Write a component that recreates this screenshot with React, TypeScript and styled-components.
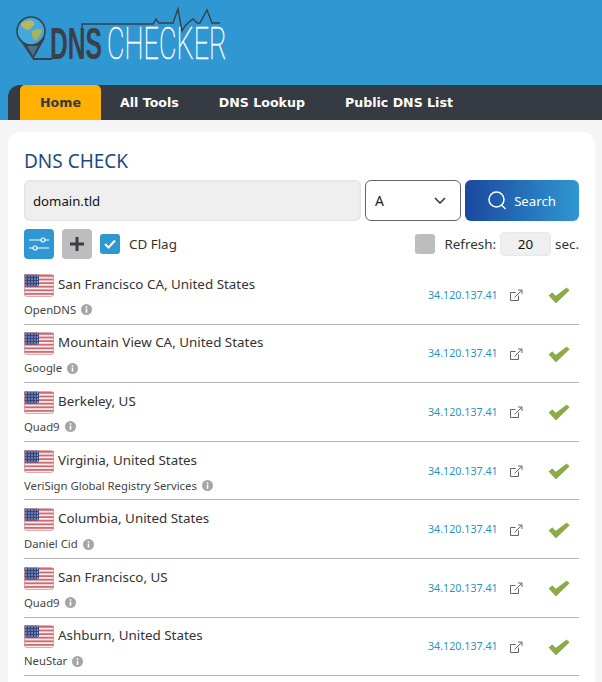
import styled, { createGlobalStyle } from 'styled-components';

const GlobalStyle = createGlobalStyle`
  html, body {
    margin: 0;
    height: 682px;
    overflow: hidden;
    background: #f5f5f5;
    font-family: "Noto Sans", "Open Sans", sans-serif;
  }
  * { box-sizing: border-box; }
`;

const Header = styled.header`
  background: #2f97d1;
  height: 120px;
  display: flex;
  flex-direction: column;
  justify-content: space-between;
`;

const LogoWrap = styled.div`
  padding: 8px 0 0 15px;
  height: 85px;
`;

const LogoSvg = styled.svg`
  overflow: visible;
`;

const Nav = styled.nav`
  margin-left: 8px;
  height: 35px;
  background: #363a42;
  border-top-left-radius: 12px;
  display: flex;
  padding-left: 12px;
`;

const NavItem = styled.a<{ $active?: boolean }>`
  display: flex;
  align-items: center;
  justify-content: center;
  height: 35px;
  padding: 0 20px;
  width: ${(p) => (p.$active ? '81px' : 'auto')};
  margin-right: ${(p) => (p.$active ? '-1px' : '0')};
  background: ${(p) => (p.$active ? '#ffb000' : 'transparent')};
  color: ${(p) => (p.$active ? '#363a42' : '#fff')};
  border-radius: 5px 5px 0 0;
  font-family: "DejaVu Sans", sans-serif;
  font-weight: 700;
  font-size: 12.6px;
`;

const Card = styled.main`
  margin: 12px 7px 0 8px;
  height: 550px;
  background: #fff;
  border-radius: 12px 12px 0 0;
  padding: 16px 16px 0;
  overflow: hidden;
`;

const Title = styled.h1`
  margin: 0;
  height: 32px;
  font-size: 19px;
  line-height: 26px;
  font-weight: 400;
  color: #1f4a80;
`;

const SearchRow = styled.div`
  display: flex;
  gap: 4px;
  height: 41px;
`;

const DomainInput = styled.div`
  width: 337px;
  background: #efefef;
  border-radius: 6px;
  box-shadow: inset 0 0 3px rgba(0, 0, 0, 0.12);
  padding-left: 9px;
  display: flex;
  align-items: center;
  font-size: 13.2px;
  color: #111;
`;

const TypeSelect = styled.div`
  width: 96px;
  border: 1px solid #666;
  border-radius: 6px;
  padding: 0 14px 0 9px;
  display: flex;
  align-items: center;
  justify-content: space-between;
  font-size: 14px;
  color: #222;
`;

const SearchButton = styled.div`
  width: 114px;
  border-radius: 6px;
  background: linear-gradient(90deg, #1a48a0, #2f97d1);
  color: #fff;
  display: flex;
  align-items: center;
  justify-content: center;
  gap: 7px;
  font-size: 13.2px;
`;

const OptionsRow = styled.div`
  display: flex;
  align-items: center;
  height: 30px;
  margin-top: 8px;
  margin-bottom: 7px;
  font-size: 13.4px;
  color: #333;
`;

const SquareButton = styled.div<{ $blue?: boolean }>`
  width: 30px;
  height: 30px;
  border-radius: 4px;
  margin-right: 8px;
  background: ${(p) => (p.$blue ? '#2f97d1' : '#bdbdbd')};
  display: flex;
  align-items: center;
  justify-content: center;
`;

const CheckBox = styled.div<{ $checked?: boolean }>`
  width: 20px;
  height: 20px;
  border-radius: 3px;
  background: ${(p) => (p.$checked ? '#2f97d1' : '#bdbdbd')};
  display: flex;
  align-items: center;
  justify-content: center;
`;

const CdLabel = styled.span`
  margin-left: 9px;
`;

const RefreshGroup = styled.div`
  margin-left: auto;
  display: flex;
  align-items: center;
`;

const RefreshLabel = styled.span`
  margin-left: 9px;
`;

const RefreshInput = styled.div`
  width: 51px;
  height: 24px;
  margin: 0 4px;
  background: #efefef;
  border-radius: 5px;
  box-shadow: inset 0 0 2px rgba(0, 0, 0, 0.1);
  text-align: center;
  line-height: 24px;
  color: #111;
`;

const Row = styled.div`
  height: 58.6px;
  border-bottom: 1px solid #b5b5b5;
  display: grid;
  grid-template-columns: 404px 82px 38px 1fr;
  align-items: center;
`;

const Location = styled.div`
  display: flex;
  flex-direction: column;
  gap: 7px;
  padding-top: 1px;
`;

const PlaceLine = styled.div`
  display: flex;
  align-items: center;
  gap: 4px;
  height: 22px;
  font-size: 13.4px;
  line-height: 22px;
  color: #333;
`;

const FlagSvg = styled.svg`
  margin-top: 3px;
`;

const Provider = styled.div`
  display: flex;
  align-items: center;
  gap: 5px;
  font-size: 11.3px;
  line-height: 16px;
  color: #444;
`;

const Ip = styled.a`
  font-size: 10.7px;
  color: #2d93c4;
`;

const ResultIcon = styled.div`
  display: flex;
  margin-top: 2px;
`;

const ExtIcon = () => (
  <svg width="13" height="13" viewBox="0 0 13 13" fill="none" stroke="#666" strokeWidth="1">
    <path d="M8.5 6.5v5h-8v-8h5" />
    <path d="M4.5 8.5L11.5 1.5M8 1h4v4" />
  </svg>
);

const Check = () => (
  <svg width="22" height="17" viewBox="0 0 22 17">
    <path d="M1 8.5l3.2-2.7 3.6 3.4L18.6 1l2.6 2.2L8 16z" fill="#8cab45" stroke="#7a9a3a" strokeWidth="0.6" />
  </svg>
);

const InfoIcon = () => (
  <svg width="11" height="11" viewBox="0 0 11 11">
    <circle cx="5.5" cy="5.5" r="5.5" fill="#a5a5a5" />
    <rect x="4.7" y="4.6" width="1.6" height="4.2" fill="#fff" />
    <rect x="4.7" y="2.2" width="1.6" height="1.5" fill="#fff" />
  </svg>
);

const Flag = () => (
  <FlagSvg width="30" height="23" viewBox="0 0 30 23">
    <rect x="0" y="0" width="30" height="23" rx="3" fill="#f6eeee" />
    {[0, 1, 2, 3, 4, 5].map((i) => (
      <rect key={i} x="0" y={1 + i * 3.6} width="30" height="1.8" fill="#cf6a72" />
    ))}
    <rect x="0" y="0" width="15" height="12.5" rx="2" fill="#35467f" />
    {[2, 5, 8, 11, 13.5].map((x) =>
      [2, 5, 8, 11].map((y) => <circle key={x + '-' + y} cx={x} cy={y} r="0.7" fill="#cdd3e6" />)
    )}
    <rect x="0.5" y="0.5" width="29" height="22" rx="2.5" fill="none" stroke="#d49a9f" strokeWidth="0.8" />
  </FlagSvg>
);

const Logo = () => (
  <LogoSvg width="220" height="56" viewBox="15 8 220 56">
    <path d="M18.5 38L33 59.5 45 38z" fill="#3a4049" />
    <path d="M27 46L33 56 38 46z" fill="#4d6f8c" />
    <circle cx="31" cy="31" r="14" fill="#45a8dc" stroke="#3a4049" strokeWidth="1.6" />
    <path d="M21 24c4-4 10-5 13-2 2 3-2 4-4 7-3 2-8-1-9-5z" fill="#b9b85f" />
    <path d="M32 31c4-2 8-2 10-1-1 5-4 9-7 11-2-3-4-6-3-10z" fill="#a9b45a" />
    <path d="M33 59H52" stroke="#3a4049" strokeWidth="2" />
    <path d="M82 42V24H153L156 19 159 23H173L178 9 182 31 185 26 189 22 193 19 197 23H200L207 10 212 23H220" fill="none" stroke="#3a4049" strokeWidth="1.4" />
    <text transform="translate(50 59) scale(0.56 1)" fontFamily="Liberation Sans" fontWeight="700" fontSize="44" fill="#3a4049">DNS</text>
    <text transform="translate(107 59) scale(0.615 1)" fontFamily="Roboto" fontWeight="100" fontSize="44" fill="#fff" stroke="#fff" strokeWidth="0.5">CHECKER</text>
  </LogoSvg>
);

const results = [
  ['San Francisco CA, United States', 'OpenDNS'],
  ['Mountain View CA, United States', 'Google'],
  ['Berkeley, US', 'Quad9'],
  ['Virginia, United States', 'VeriSign Global Registry Services'],
  ['Columbia, United States', 'Daniel Cid'],
  ['San Francisco, US', 'Quad9'],
  ['Ashburn, United States', 'NeuStar'],
];

export default function App() {
  return (
    <>
      <GlobalStyle />
      <Header>
        <LogoWrap>
          <Logo />
        </LogoWrap>
        <Nav>
          <NavItem $active>Home</NavItem>
          <NavItem>All Tools</NavItem>
          <NavItem>DNS Lookup</NavItem>
          <NavItem>Public DNS List</NavItem>
        </Nav>
      </Header>
      <Card>
        <Title>DNS CHECK</Title>
        <SearchRow>
          <DomainInput>domain.tld</DomainInput>
          <TypeSelect>
            A
            <svg width="12" height="7" viewBox="0 0 12 7" fill="none" stroke="#333" strokeWidth="1.5">
              <path d="M1 1l5 5 5-5" />
            </svg>
          </TypeSelect>
          <SearchButton>
            <svg width="19" height="19" viewBox="0 0 19 19" fill="none" stroke="#fff" strokeWidth="1.5">
              <circle cx="8.5" cy="8.5" r="7.5" />
              <path d="M13.5 14l4 4" />
            </svg>
            Search
          </SearchButton>
        </SearchRow>
        <OptionsRow>
          <SquareButton $blue>
            <svg width="20" height="16" viewBox="0 0 20 16" fill="none" stroke="#fff" strokeWidth="1.2">
              <path d="M0 4h12M16 4h4M0 12h4M8 12h12" />
              <circle cx="14" cy="4" r="2" />
              <circle cx="6" cy="12" r="2" />
            </svg>
          </SquareButton>
          <SquareButton>
            <svg width="14" height="14" viewBox="0 0 14 14" fill="none" stroke="#3a3f46" strokeWidth="3">
              <path d="M7 0v14M0 7h14" />
            </svg>
          </SquareButton>
          <CheckBox $checked>
            <svg width="12" height="10" viewBox="0 0 12 10" fill="none" stroke="#fff" strokeWidth="2">
              <path d="M1 5l3.5 3.5L11 1.5" />
            </svg>
          </CheckBox>
          <CdLabel>CD Flag</CdLabel>
          <RefreshGroup>
            <CheckBox />
            <RefreshLabel>Refresh:</RefreshLabel>
            <RefreshInput>20</RefreshInput>
            sec.
          </RefreshGroup>
        </OptionsRow>
        {results.map(([place, provider]) => (
          <Row key={place + provider}>
            <Location>
              <PlaceLine>
                <Flag />
                {place}
              </PlaceLine>
              <Provider>
                {provider}
                <InfoIcon />
              </Provider>
            </Location>
            <Ip>34.120.137.41</Ip>
            <ResultIcon>
              <ExtIcon />
            </ResultIcon>
            <ResultIcon>
              <Check />
            </ResultIcon>
          </Row>
        ))}
      </Card>
    </>
  );
}
